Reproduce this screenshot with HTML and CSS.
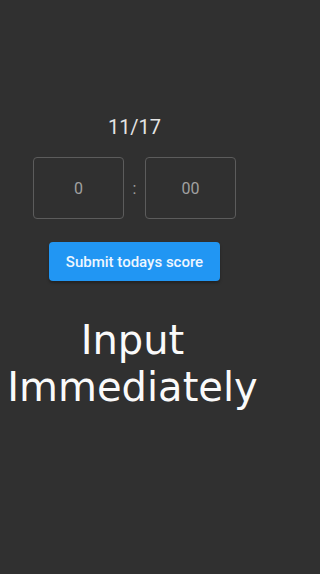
FILE: index.html
```html
<!DOCTYPE html>
<html>
<head>
<meta charset="utf-8">
<link rel="stylesheet" href="styles.css">
</head>
<body>
<div class="page">
  <div class="entry">
    <div class="date">11/17</div>
    <div class="time-row">
      <div class="time-box">0</div>
      <div class="sep">:</div>
      <div class="time-box">00</div>
    </div>
    <button class="submit">Submit todays score</button>
  </div>
  <div class="notice">Input Immediately</div>
</div>
</body>
</html>
```

FILE: styles.css
```css
html, body {
  margin: 0;
  padding: 0;
  background: #303030;
}
.page {
  width: 265px;
  height: 574px;
  display: flex;
  flex-direction: column;
  align-items: center;
  padding-top: 115px;
  box-sizing: border-box;
}
.entry {
  display: flex;
  flex-direction: column;
  align-items: center;
  padding-left: 4px;
}
.date {
  font-family: Roboto, "Liberation Sans", sans-serif;
  font-size: 20px;
  line-height: 24px;
  color: #e4e4e4;
}
.time-row {
  margin-top: 18px;
  display: flex;
  align-items: center;
}
.time-box {
  width: 91px;
  height: 62px;
  box-sizing: border-box;
  border: 1.5px solid #5c5c5c;
  border-radius: 4px;
  display: flex;
  align-items: center;
  justify-content: center;
  font-family: Roboto, "Liberation Sans", sans-serif;
  font-size: 16px;
  color: #a0a0a0;
}
.sep {
  width: 21px;
  text-align: center;
  font-family: Roboto, "Liberation Sans", sans-serif;
  font-size: 16px;
  color: #a0a0a0;
}
.submit {
  margin-top: 23px;
  width: 171px;
  height: 39px;
  border: none;
  border-radius: 4px;
  background: #2196f3;
  color: #eef6ff;
  font-family: Roboto, "Liberation Sans", sans-serif;
  font-weight: 500;
  font-size: 15px;
  padding: 0;
  box-shadow: 0 2px 3px rgba(0,0,0,0.3);
}
.notice {
  margin-top: 36px;
  font-family: "DejaVu Sans", sans-serif;
  font-size: 40px;
  line-height: 47px;
  color: #fafafa;
  text-align: center;
}
```
